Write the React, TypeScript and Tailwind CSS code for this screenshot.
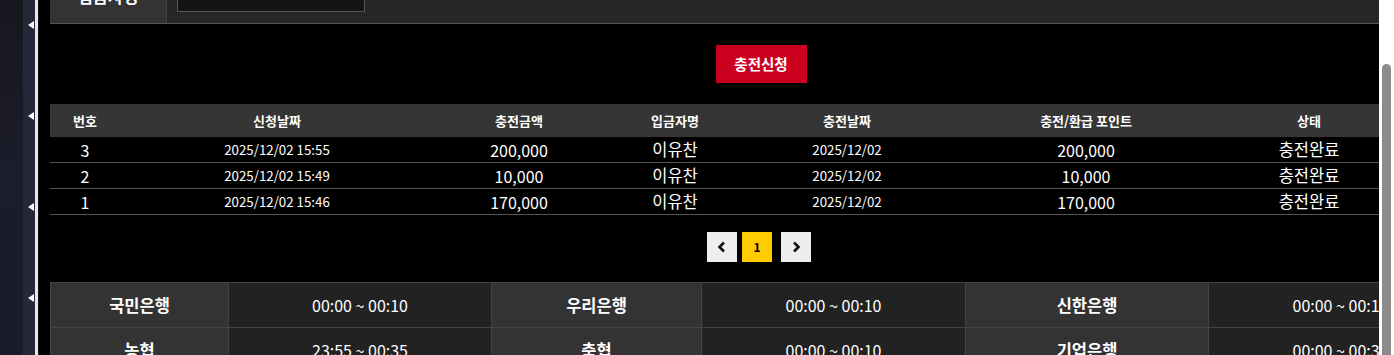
import React from 'react';

const font = { fontFamily: '"Noto Sans CJK KR", "Noto Sans", sans-serif' };

const cols = [70, 314, 170, 142, 202, 276, 170];

const history = [
  { no: '3', req: '2025/12/02 15:55', amount: '200,000', name: '이유찬', date: '2025/12/02', point: '200,000', status: '충전완료' },
  { no: '2', req: '2025/12/02 15:49', amount: '10,000', name: '이유찬', date: '2025/12/02', point: '10,000', status: '충전완료' },
  { no: '1', req: '2025/12/02 15:46', amount: '170,000', name: '이유찬', date: '2025/12/02', point: '170,000', status: '충전완료' },
];

const banks = [
  ['국민은행', '00:00 ~ 00:10', '우리은행', '00:00 ~ 00:10', '신한은행', '00:00 ~ 00:10'],
  ['농협', '23:55 ~ 00:35', '축협', '00:00 ~ 00:10', '기업은행', '00:00 ~ 00:30'],
];
const bankCols = [178, 263, 210, 264, 243, 264];

function Triangle() {
  return <div className="w-0 h-0 border-y-[4px] border-y-transparent border-r-[6px] border-r-white ml-auto mr-[1px]" />;
}

export default function App() {
  return (
    <div className="h-[355px] w-[1394px] overflow-hidden flex bg-black" style={font}>
      {/* left side strip */}
      <div className="w-[23px] shrink-0 bg-gradient-to-b from-[#17171f] via-[#1c1d2b] to-[#1a1b28]" />
      <div className="w-[12px] shrink-0 bg-[#262839] flex flex-col pt-[21px] gap-[83px]">
        <Triangle />
        <Triangle />
        <Triangle />
        <Triangle />
      </div>
      <div className="w-[3px] shrink-0 bg-[#e8e8e8]" />
      <div className="w-[1px] shrink-0 bg-[#111]" />

      {/* main panel */}
      <div className="w-[1340px] shrink-0 bg-black pl-[11px] overflow-hidden">
        {/* cut-off form row */}
        <div className="flex h-[55px] -mt-[31px] bg-[#262626] border-b border-[#555]">
          <div className="w-[117px] bg-[#333] border-r border-[#444] flex items-center justify-center text-white font-bold text-[16.5px]">
            입금자명
          </div>
          <div className="flex items-center pl-[10px]">
            <div className="w-[188px] h-[31px] bg-[#141414] border border-[#555]" />
          </div>
        </div>

        <div className="flex justify-center mt-[21px] pl-[93px]">
          <button className="w-[91px] h-[38px] bg-[#cb001f] text-white font-bold text-[14.5px]">충전신청</button>
        </div>

        {/* history table */}
        <div className="mt-[21px] w-[1344px]">
          <div className="flex h-[33px] bg-[#353535] text-white font-bold text-[13px]">
            {['번호', '신청날짜', '충전금액', '입금자명', '충전날짜', '충전/환급 포인트', '상태'].map((h, i) => (
              <div key={h} style={{ width: cols[i] }} className="flex items-center justify-center shrink-0">{h}</div>
            ))}
          </div>
          {history.map((r) => (
            <div key={r.no} className="flex h-[26px] border-b border-[#555] text-white items-center">
              <div style={{ width: cols[0] }} className="text-center text-[16px] shrink-0">{r.no}</div>
              <div style={{ width: cols[1] }} className="text-center text-[13.3px] shrink-0">{r.req}</div>
              <div style={{ width: cols[2] }} className="text-center text-[16px] shrink-0">{r.amount}</div>
              <div style={{ width: cols[3] }} className="text-center text-[16.5px] shrink-0">{r.name}</div>
              <div style={{ width: cols[4] }} className="text-center text-[13.3px] shrink-0">{r.date}</div>
              <div style={{ width: cols[5] }} className="text-center text-[16px] shrink-0">{r.point}</div>
              <div style={{ width: cols[6] }} className="text-center text-[16.5px] shrink-0">{r.status}</div>
            </div>
          ))}
        </div>

        {/* pagination */}
        <div className="flex justify-center items-center mt-[17px] pl-[89px] gap-[5px]">
          <div className="w-[30px] h-[30px] bg-[#eeeeee] flex items-center justify-center">
            <svg width="10" height="12" viewBox="0 0 10 12"><path d="M7 1.5 L2.5 6 L7 10.5" stroke="#111" strokeWidth="2.6" fill="none" /></svg>
          </div>
          <div className="w-[30px] h-[30px] bg-[#ffcc00] flex items-center justify-center text-black font-bold text-[12px]">1</div>
          <div className="w-[30px] h-[30px] bg-[#eeeeee] flex items-center justify-center ml-[4px]">
            <svg width="10" height="12" viewBox="0 0 10 12"><path d="M3 1.5 L7.5 6 L3 10.5" stroke="#111" strokeWidth="2.6" fill="none" /></svg>
          </div>
        </div>

        {/* bank maintenance table */}
        <div className="mt-[20px] w-[1422px] border-t border-l border-[#444]">
          {banks.map((row, ri) => (
            <div key={ri} className="flex h-[45px]">
              {row.map((c, ci) => (
                <div
                  key={ci}
                  style={{ width: bankCols[ci] }}
                  className={`shrink-0 flex items-center justify-center text-white border-r border-b border-[#444] ${
                    ci % 2 === 0 ? 'bg-[#333333] font-bold text-[16.5px]' : 'bg-[#222222] text-[16px]'
                  }`}
                >
                  {c}
                </div>
              ))}
            </div>
          ))}
        </div>
      </div>

      {/* scrollbar */}
      <div className="flex-1 bg-white pt-[64px] pl-[3px] pr-[3px]">
        <div className="w-[9px] h-full bg-[#8c8c8c] rounded-t-full" />
      </div>
    </div>
  );
}
